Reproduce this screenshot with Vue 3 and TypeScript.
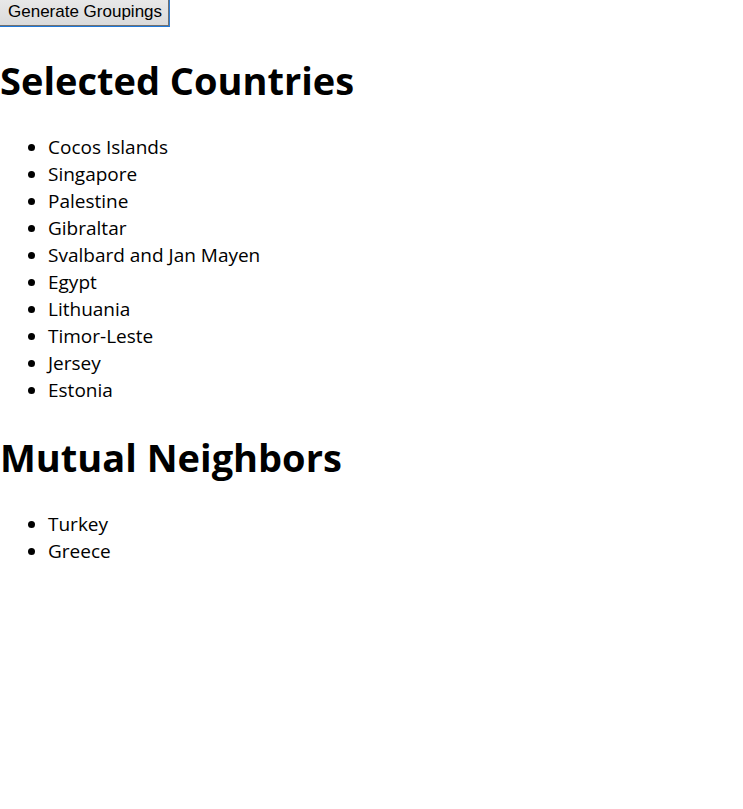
<script setup lang="ts">
import { ref } from 'vue'

const selected = ref<string[]>([
  'Cocos Islands',
  'Singapore',
  'Palestine',
  'Gibraltar',
  'Svalbard and Jan Mayen',
  'Egypt',
  'Lithuania',
  'Timor-Leste',
  'Jersey',
  'Estonia',
])
const neighbors = ref<string[]>(['Turkey', 'Greece'])
</script>

<template>
  <main class="page">
    <button type="button" class="generate">Generate Groupings</button>
    <section>
      <h1>Selected Countries</h1>
      <ul>
        <li v-for="country in selected" :key="country">{{ country }}</li>
      </ul>
    </section>
    <section>
      <h1>Mutual Neighbors</h1>
      <ul>
        <li v-for="country in neighbors" :key="country">{{ country }}</li>
      </ul>
    </section>
  </main>
</template>

<style>
body {
  background: #fff;
}
</style>

<style scoped>
.page {
  color: #000;
  font-family: "Open Sans", "Noto Sans", sans-serif;
  font-size: 19px;
  line-height: 27px;
}

.generate {
  display: block;
  height: 27px;
  margin: 0;
  padding: 0 7px 2px 8px;
  border: 0;
  border-right: 1px solid #2f7fd6;
  border-bottom: 1px solid #1f78d8;
  background: linear-gradient(#e8e8e8, #dadada);
  box-shadow: inset -1px -1px #707070;
  color: #000;
  font-family: "Liberation Sans", Arial, sans-serif;
  font-size: 17px;
  line-height: 24px;
}

h1 {
  margin: 27px 0;
  font-size: 38px;
  font-weight: 700;
  line-height: 53px;
}

ul {
  margin: 0;
  padding: 0 0 0 48px;
}
</style>
